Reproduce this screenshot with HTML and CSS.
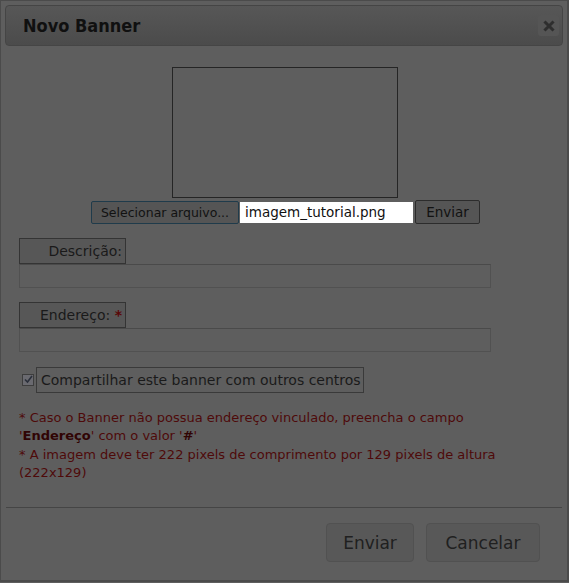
FILE: index.html
```html
<!DOCTYPE html>
<html>
<head>
<meta charset="utf-8">
<link rel="stylesheet" href="styles.css">
</head>
<body>
<div class="dialog">
  <div class="titlebar">
    <span class="title">Novo Banner</span>
    <span class="close"><svg width="12" height="12" viewBox="0 0 12 12"><path d="M2.5 2.5 L9.5 9.5 M9.5 2.5 L2.5 9.5" stroke="#2e2e2e" stroke-width="3" stroke-linecap="square"/></svg></span>
  </div>
  <div class="content">
    <div class="preview"></div>
    <div class="filerow">
      <span class="btn-file">Selecionar arquivo...</span>
      <span class="filename">imagem_tutorial.png</span>
      <span class="btn-send">Enviar</span>
    </div>
    <div class="field">
      <div class="label">Descrição:</div>
      <div class="input"></div>
    </div>
    <div class="field">
      <div class="label">Endereço: <span class="req">*</span></div>
      <div class="input"></div>
    </div>
    <div class="check-row">
      <span class="checkbox"><svg width="9" height="9" viewBox="0 0 9 9"><path d="M1 4.5 L3.5 7 L8 1" fill="none" stroke="#2a2f3a" stroke-width="1.6"/></svg></span>
      <span class="check-label">Compartilhar este banner com outros centros</span>
    </div>
    <div class="notes">
      <p>* Caso o Banner não possua endereço vinculado, preencha o campo '<b>Endereço</b>' com o valor '<b>#</b>'</p>
      <p>* A imagem deve ter 222 pixels de comprimento por 129 pixels de altura (222x129)</p>
    </div>
  </div>
  <div class="footer">
    <span class="fbtn fbtn-send">Enviar</span>
    <span class="fbtn fbtn-cancel">Cancelar</span>
  </div>
</div>
</body>
</html>
```
FILE: styles.css
```css
html, body {
  margin: 0;
  padding: 0;
  background: #5e5e5e;
}
body {
  font-family: "DejaVu Sans", Verdana, sans-serif;
  color: #1a1a1a;
}
.dialog {
  box-sizing: border-box;
  width: 569px;
  height: 582px;
  border: 1px solid #4b4b4b;
  border-right-width: 2px;
  border-bottom-width: 2px;
  background: #5e5e5e;
  padding: 4px 4px 0 4px;
  display: flex;
  flex-direction: column;
}
.titlebar {
  height: 39px;
  border: 1px solid #454545;
  border-radius: 4px;
  background: linear-gradient(#575757, #4b4b4b);
  display: flex;
  align-items: center;
  justify-content: space-between;
  padding: 0 2px 0 17px;
}
.title {
  font-family: "DejaVu Sans Condensed", "DejaVu Sans", sans-serif;
  font-weight: bold;
  font-size: 18px;
  color: #101010;
  margin-top: -1px;
}
.close {
  width: 21px;
  height: 21px;
  border-radius: 3px;
  background: #555;
  display: flex;
  align-items: center;
  justify-content: center;
  margin-right: 1px;
}
.content {
  padding: 21px 0 0 14px;
  height: 440px;
}
.preview {
  box-sizing: border-box;
  width: 226px;
  height: 131px;
  border: 1px solid #252525;
  margin: 0 0 2px 153px;
}
.filerow {
  display: flex;
  align-items: center;
  margin-left: 72px;
  height: 24px;
}
.btn-file {
  box-sizing: border-box;
  height: 23px;
  width: 148px;
  border: 1px solid #1f3b4b;
  border-radius: 2px;
  background: #555;
  font-size: 12.5px;
  display: flex;
  align-items: center;
  justify-content: center;
  color: #121212;
}
.filename {
  box-sizing: border-box;
  height: 21px;
  width: 173px;
  background: #fff;
  color: #111;
  font-size: 13.5px;
  padding-left: 5px;
  margin-left: 1px;
  display: flex;
  align-items: center;
}
.btn-send {
  box-sizing: border-box;
  height: 24px;
  width: 65px;
  margin-left: 2px;
  border: 1px solid #2c2c2c;
  border-radius: 2px;
  background: #555;
  font-size: 13.5px;
  color: #121212;
  display: flex;
  align-items: center;
  justify-content: center;
}
.field {
  margin-top: 14px;
  width: 472px;
}
.field + .field {
  margin-top: 14px;
}
.label {
  box-sizing: border-box;
  width: 107px;
  height: 26px;
  border: 1px solid #343434;
  background: #575757;
  text-align: right;
  font-size: 14px;
  line-height: 24px;
  padding-right: 3px;
}
.req {
  color: #5a0808;
  font-weight: bold;
}
.input {
  box-sizing: border-box;
  height: 24px;
  border: 1px solid #515151;
  border-top-color: #4a4a4a;
  background: #5e5e5e;
}
.check-row {
  display: flex;
  align-items: center;
  margin-top: 15px;
  margin-left: 3px;
}
.checkbox {
  box-sizing: border-box;
  width: 12px;
  height: 12px;
  border: 1px solid #3d3d3d;
  background: #6a6a70;
  display: flex;
  align-items: center;
  justify-content: center;
  margin-top: -1px;
}
.check-label {
  box-sizing: border-box;
  height: 26px;
  border: 1px solid #3a3a3a;
  margin-left: 2px;
  padding: 0 2px 0 4px;
  font-size: 14px;
  line-height: 24px;
}
.notes {
  margin: 16px 0 0 0;
  width: 482px;
  color: #4e0a0a;
  font-size: 13px;
  line-height: 18.3px;
}
.notes p {
  margin: 0;
}
.notes b {
  color: #300404;
}
.footer {
  margin: 0 1px;
  border-top: 1px solid #454545;
  display: flex;
  justify-content: flex-end;
  padding: 15px 22px 0 0;
  gap: 12px;
}
.fbtn {
  box-sizing: border-box;
  height: 39px;
  border: 1px solid #515151;
  border-radius: 4px;
  background: #585858;
  font-size: 17px;
  color: #202020;
  display: flex;
  align-items: center;
  justify-content: center;
}
.fbtn-send { width: 88px; }
.fbtn-cancel { width: 114px; }
```
